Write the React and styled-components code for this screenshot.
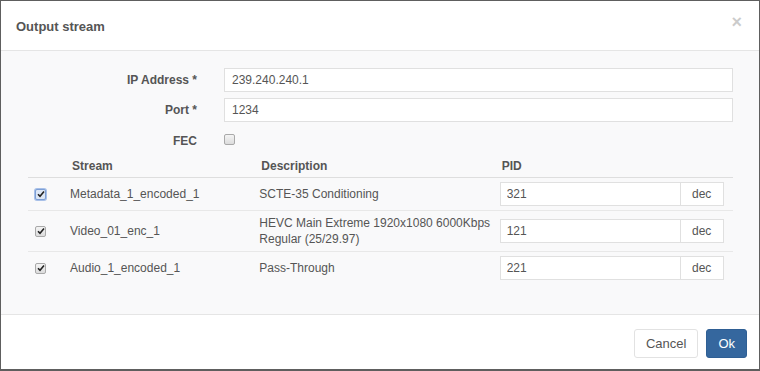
import styled, { createGlobalStyle } from 'styled-components'

const GlobalStyle = createGlobalStyle`
  html, body {
    margin: 0;
    padding: 0;
  }
  body {
    background: #5e5e5e;
    font-family: "Liberation Sans", Arial, sans-serif;
    color: #555;
  }
  * {
    box-sizing: border-box;
  }
`

const Backdrop = styled.div`
  width: 760px;
  height: 371px;
  padding: 1px 1px 2px 1px;
`

const Modal = styled.div`
  height: 100%;
  background: #fff;
  display: flex;
  flex-direction: column;
`

const Header = styled.div`
  height: 50px;
  padding: 0 15px;
  display: flex;
  align-items: center;
  justify-content: space-between;
  border-bottom: 1px solid #e5e5e5;
`

const Title = styled.h4`
  margin: 0;
  font-size: 13px;
  font-weight: bold;
  color: #555;
  padding-top: 2px;
`

const Close = styled.button`
  border: 0;
  background: none;
  padding: 0;
  margin-top: -8px;
  margin-right: 2px;
  font-family: "Liberation Sans", Arial, sans-serif;
  font-size: 18px;
  font-weight: bold;
  line-height: 1;
  color: #000;
  opacity: 0.2;
  cursor: pointer;
`

const Body = styled.div`
  flex: 1;
  background: #f9f9fa;
  padding: 17px 26px 0 27px;
  border-bottom: 1px solid #e5e5e5;
`

const FormGrid = styled.div`
  display: grid;
  grid-template-columns: 169px 1fr;
  column-gap: 27px;
  row-gap: 6px;
  align-items: center;
`

const Label = styled.label`
  text-align: right;
  font-size: 12px;
  font-weight: bold;
  color: #555;
  align-self: ${p => (p.$top ? 'start' : 'center')};
  padding-top: ${p => (p.$top ? '6px' : '0')};
`

const TextInput = styled.input`
  height: 24px;
  width: 100%;
  border: 1px solid #e0e0e0;
  background: #fff;
  padding: 0 7px;
  font-family: inherit;
  font-size: 12px;
  color: #555;
  outline: none;
`

const CheckCell = styled.div`
  height: 20px;
  padding-top: 3px;
`

const Box = styled.span`
  display: inline-flex;
  align-items: center;
  justify-content: center;
  width: 11px;
  height: 11px;
  border-radius: 2px;
  border: 1px solid ${p => (p.$focus ? '#7d9fd6' : '#a9a9a9')};
  background: ${p => (p.$focus ? '#dce6f5' : 'linear-gradient(#f4f4f4, #dcdcdc)')};
  box-shadow: ${p => (p.$focus ? '0 0 0 1px #a8c0e8' : 'none')};
`

const Table = styled.table`
  width: 100%;
  border-collapse: collapse;
  table-layout: fixed;
  font-size: 12px;
  color: #555;
`

const Th = styled.th`
  text-align: left;
  font-weight: bold;
  padding: 10px 0 3px 2px;
  line-height: 16px;
  border-bottom: 1px solid #dedede;
`

const Td = styled.td`
  padding: ${p => (p.$check ? '4px 0 4px 7px' : '4px 0')};
  line-height: 16px;
  vertical-align: middle;
  border-bottom: ${p => (p.$last ? 'none' : '1px solid #e8e8e8')};
`

const PidGroup = styled.div`
  display: flex;
  width: 224px;
  height: 24px;
`

const PidInput = styled(TextInput)`
  flex: 1;
  padding: 0 6px;
`

const Addon = styled.span`
  width: 43px;
  display: flex;
  align-items: center;
  justify-content: center;
  border: 1px solid #e0e0e0;
  border-left: 0;
  background: #fff;
  font-size: 12px;
  color: #555;
`

const Footer = styled.div`
  height: 54px;
  padding: 14px 12px 0;
  display: flex;
  justify-content: flex-end;
  align-items: flex-start;
  gap: 8px;
`

const Button = styled.button`
  height: 29px;
  padding: 0 11px;
  border-radius: 3px;
  border: 1px solid ${p => (p.$primary ? '#2f5f94' : '#e2e2e2')};
  background: ${p => (p.$primary ? '#35679e' : '#fff')};
  color: ${p => (p.$primary ? '#fff' : '#555')};
  font-family: "Liberation Sans", Arial, sans-serif;
  font-size: 13px;
  cursor: pointer;
`

function Check({ checked, focus }) {
  return (
    <Box $focus={focus}>
      {checked && (
        <svg width="8" height="8" viewBox="0 0 8 8">
          <path d="M1 4.2 L3 6.2 L7 1.5" fill="none" stroke="#222" strokeWidth="1.6" />
        </svg>
      )}
    </Box>
  )
}

const streams = [
  { name: 'Metadata_1_encoded_1', desc: 'SCTE-35 Conditioning', pid: '321', focus: true },
  { name: 'Video_01_enc_1', desc: 'HEVC Main Extreme 1920x1080 6000Kbps Regular (25/29.97)', pid: '121' },
  { name: 'Audio_1_encoded_1', desc: 'Pass-Through', pid: '221' },
]

export default function App() {
  return (
    <>
      <GlobalStyle />
      <Backdrop>
        <Modal>
          <Header>
            <Title>Output stream</Title>
            <Close>×</Close>
          </Header>
          <Body>
            <FormGrid>
              <Label>IP Address *</Label>
              <TextInput defaultValue="239.240.240.1" />
              <Label>Port *</Label>
              <TextInput defaultValue="1234" />
              <Label $top>FEC</Label>
              <CheckCell>
                <Check />
              </CheckCell>
            </FormGrid>
            <Table>
              <colgroup>
                <col style={{ width: 42 }} />
                <col style={{ width: 189 }} />
                <col style={{ width: 240 }} />
                <col style={{ width: 233 }} />
              </colgroup>
              <thead>
                <tr>
                  <Th />
                  <Th>Stream</Th>
                  <Th>Description</Th>
                  <Th>PID</Th>
                </tr>
              </thead>
              <tbody>
                {streams.map((s, i) => {
                  const last = i === streams.length - 1
                  return (
                    <tr key={s.name}>
                      <Td $check $last={last}>
                        <Check checked focus={s.focus} />
                      </Td>
                      <Td $last={last}>{s.name}</Td>
                      <Td $last={last}>{s.desc}</Td>
                      <Td $last={last}>
                        <PidGroup>
                          <PidInput defaultValue={s.pid} />
                          <Addon>dec</Addon>
                        </PidGroup>
                      </Td>
                    </tr>
                  )
                })}
              </tbody>
            </Table>
          </Body>
          <Footer>
            <Button>Cancel</Button>
            <Button $primary>Ok</Button>
          </Footer>
        </Modal>
      </Backdrop>
    </>
  )
}
